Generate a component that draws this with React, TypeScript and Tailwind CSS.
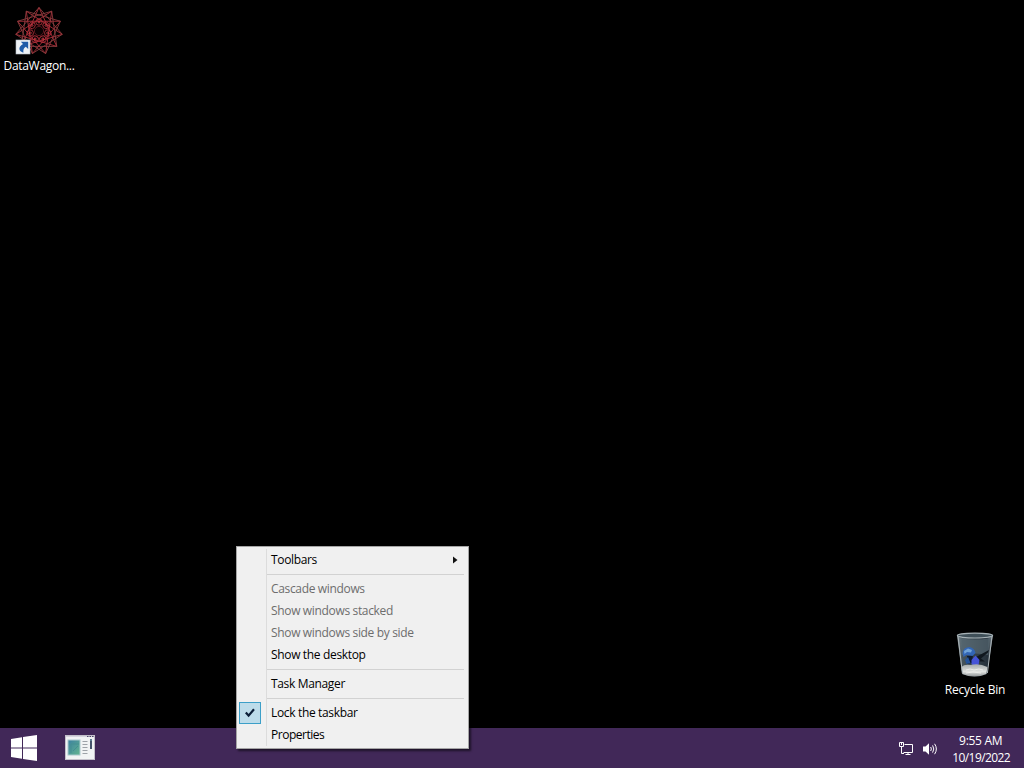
import clsx from 'clsx'
import { ReactNode } from 'react'

type MenuEntry = {
  label: string
  disabled?: boolean
  checked?: boolean
  submenu?: boolean
  tight?: boolean
}

const groups: MenuEntry[][] = [
  [{ label: 'Toolbars', submenu: true }],
  [
    { label: 'Cascade windows', disabled: true },
    { label: 'Show windows stacked', disabled: true },
    { label: 'Show windows side by side', disabled: true },
    { label: 'Show the desktop' },
  ],
  [{ label: 'Task Manager' }],
  [
    { label: 'Lock the taskbar', checked: true },
    { label: 'Properties', tight: true },
  ],
]

function MenuItem({ label, disabled, checked, submenu, tight }: MenuEntry) {
  return (
    <div className="flex h-[22px] items-center">
      <div className="flex w-[34px] shrink-0 pl-[2px]">
        {checked && (
          <div className="flex h-[22px] w-[22px] items-center justify-center border border-[#3c9fc8] bg-[#bddcea]">
            <svg width="12" height="12" viewBox="0 0 12 12">
              <path d="M1.8 5.6 4.6 8.6 10 2.2" fill="none" stroke="#0c1f38" strokeWidth="2.2" />
            </svg>
          </div>
        )}
      </div>
      <div
        className={clsx(
          'flex-1',
          disabled ? 'text-[#6d6d6d]' : 'text-black',
          tight ? 'tracking-[-0.48px]' : 'tracking-[-0.34px]',
        )}
      >
        {label}
      </div>
      {submenu && (
        <svg width="5" height="8" viewBox="0 0 5 8" className="mr-[10px]">
          <path d="M0 0.5 4.5 4 0 7.5Z" fill="#111" />
        </svg>
      )}
    </div>
  )
}

function ContextMenu() {
  return (
    <div className="absolute left-[236px] top-[546px] w-[233px] border border-[#a5a5a5] bg-[#f0f0f0] py-[2px] shadow-[2px_2px_2px_rgba(0,0,0,0.55)]">
      <div className="absolute bottom-[2px] left-[29px] top-[2px] w-px bg-[#dcdcdc]" />
      {groups.map((group, i) => (
        <div key={i}>
          {i > 0 && (
            <div className="flex h-[7px] items-center pl-[30px] pr-[4px]">
              <div className="h-px w-full bg-[#d2d2d2]" />
            </div>
          )}
          {group.map((entry) => (
            <MenuItem key={entry.label} {...entry} />
          ))}
        </div>
      ))}
    </div>
  )
}

// star polygon with n corners, every step-th corner joined
function star(n: number, step: number, r: number, turn = 0) {
  const points: string[] = []
  for (let i = 0; i < n; i++) {
    const a = ((i * step) / n) * Math.PI * 2 + turn
    points.push(`${(24 + r * Math.sin(a)).toFixed(2)},${(24 - r * Math.cos(a)).toFixed(2)}`)
  }
  return points.join(' ')
}

function WagonIcon() {
  const petals = [0, 1, 2, 3, 4, 5, 6]
  return (
    <svg width="48" height="48" viewBox="0 0 48 48">
      <g fill="none" stroke="#b9303c" strokeWidth="0.9">
        <polygon points={star(11, 4, 23.5)} stroke="#b02e39" />
        <polygon points={star(11, 3, 23.5)} stroke="#8a3c3e" />
        {petals.map((p) => (
          <g key={p} transform={`rotate(${p * 51.43} 24 24)`}>
            <circle cx="24" cy="15" r="3.2" stroke="#a82c37" />
            <circle cx="24" cy="15" r="1" stroke="#c83a45" />
          </g>
        ))}
      </g>
      <circle cx="24" cy="24" r="4.6" fill="#0a0203" stroke="#7c2029" strokeWidth="0.7" />
      <rect x="1" y="33" width="14" height="14" fill="#eef2f6" stroke="#b4bcc6" strokeWidth="0.6" />
      <path d="M5.8 34.8h7.4v7.2l-2.4-2.3c-2 1.2-2.8 3-2.4 6-4.6-1.4-5.8-5.6-0.4-8.7z" fill="#1f5ca8" />
    </svg>
  )
}

function RecycleBinIcon() {
  return (
    <svg width="40" height="48" viewBox="0 0 40 48">
      <defs>
        <linearGradient id="glass" x1="0" x2="1">
          <stop offset="0" stopColor="#8c989e" />
          <stop offset="0.14" stopColor="#46545c" />
          <stop offset="0.5" stopColor="#35424a" />
          <stop offset="0.85" stopColor="#25303a" />
          <stop offset="1" stopColor="#8a979e" />
        </linearGradient>
        <linearGradient id="base" x1="0" x2="0" y1="0" y2="1">
          <stop offset="0" stopColor="#a4a9aa" />
          <stop offset="0.6" stopColor="#e0e2e0" />
          <stop offset="1" stopColor="#8f9496" />
        </linearGradient>
      </defs>
      <path d="M2 4 7 43q13 5 25 0L38 4Z" fill="url(#glass)" />
      <path d="M5 7q15 3 30 0l-2 17q-13-3-26 0Z" fill="#5e707a" opacity="0.6" />
      <path d="M21 26 34 19l-1 2.5-7 6 4 3-6 0Z" fill="#10171e" />
      <path d="M12 25 18 24 17 32 12 33Z" fill="#0f1b30" />
      <path d="M7.500 22q1-6 7-6 5 1 6 6l-3 3-6-1-3 2Z" fill="#3265b4" />
      <path d="m9 20 4-2.500 4 1.500-1 2.500-4-.5-2.500 2Z" fill="#70a3d8" />
      <path d="m10 29 3-3 2.500 6-4 1Z" fill="#23539c" />
      <path d="m16.500 29 4-4.500 4 4.500-1 5.500-4 1.500-3-3Z" fill="#4654d8" />
      <path d="M6.400 36q3-3 9-2 9-2 17 2l-1 7q-12 5-24 0Z" fill="url(#base)" />
      <path d="m11 39 4-1 4 1 5-1 4 1M11 42l7-1 8 1" fill="none" stroke="#f5f5f2" opacity="0.7" />
      <path d="M3 5 7.400 42M37 5l-4.600 37" fill="none" stroke="#aab3b7" strokeWidth="1" />
      <ellipse cx="20" cy="4.600" rx="17.600" ry="2.400" fill="#405059" stroke="#a6b1b6" strokeWidth="1.2" />
    </svg>
  )
}

type ShortcutProps = {
  label: string
  className: string
  children: ReactNode
}

function Shortcut({ label, className, children }: ShortcutProps) {
  return (
    <div className={clsx('absolute flex w-[76px] flex-col items-center text-white', className)}>
      {children}
      <div className="whitespace-nowrap pt-[3px] leading-4">{label}</div>
    </div>
  )
}

function StartLogo() {
  return (
    <svg width="26" height="26" viewBox="0 0 26 26" fill="#fff">
      <path d="M0 4 11 2.3V12.5H0ZM12 2.1 26 0V12.5H12ZM0 13.5H11V23.7L0 22ZM12 13.5H26V26L12 23.9Z" />
    </svg>
  )
}

function ServerAppIcon() {
  return (
    <svg width="30" height="25" viewBox="0 0 30 25">
      <defs>
        <linearGradient id="pane" x1="0" x2="1" y1="0" y2="1">
          <stop offset="0" stopColor="#3c80a0" />
          <stop offset="1" stopColor="#62b590" />
        </linearGradient>
      </defs>
      <rect x="0.5" y="0.5" width="29" height="24" fill="#f1f3f4" stroke="#c3c0ca" />
      <path d="M1 1.500h28" stroke="#d5d4de" />
      <path d="M22 1.500h1.500M24.500 1.500H26M27 1.500h1.500" stroke="#4d4668" />
      <rect x="3" y="5" width="12" height="15" fill="url(#pane)" stroke="#a9c8cc" />
      <path d="M6 18V9h8M8 16l5-5" fill="none" stroke="#458f91" />
      <path
        d="M17.500 6.500h5M17.500 9.500h5M17.500 12.500h5M17.500 15.500h5M17.500 18.500h5"
        stroke="#9da2a8"
      />
      <rect x="25" y="4" width="2" height="10" fill="#46546b" />
      <path d="M25 5h2" stroke="#78aabc" />
    </svg>
  )
}

function NetworkIcon() {
  return (
    <svg width="15" height="14" viewBox="0 0 15 14" fill="none" stroke="#fff">
      <path d="M5.5 2.5h8v8h-9M6.500 12.500h5M9 10.500v2" />
      <path d="M.5.5h4v4h-4ZM2.500 4.500v7H5M2.500 1v2" />
    </svg>
  )
}

function SpeakerIcon() {
  return (
    <svg width="16" height="14" viewBox="0 0 16 14" fill="none" stroke="#fff">
      <path d="M1 4.500h2.500L7 1.200v11.600L3.500 9.500H1Z" fill="#fff" stroke="none" />
      <path d="M8.700 5q1.300 2 0 4M10.600 3.400q2.400 3.600 0 7.200M12.600 1.800q3.500 5.200 0 10.400" />
    </svg>
  )
}

function Taskbar() {
  return (
    <div className="flex h-10 items-center bg-[#412858] text-white">
      <div className="flex flex-1 items-center gap-[28px] pl-[11px]">
        <StartLogo />
        <div className="pb-[2px]">
          <ServerAppIcon />
        </div>
      </div>
      <div className="flex items-center gap-[8px] pr-[14px]">
        <div className="flex items-center gap-[8px] pt-[2px]">
          <NetworkIcon />
          <SpeakerIcon />
        </div>
        <div className="ml-[6px] pt-[2px] text-center leading-[17px]">
          <div className="pr-px tracking-[-0.3px]">9:55 AM</div>
          <div className="tracking-[-0.6px]">10/19/2022</div>
        </div>
      </div>
    </div>
  )
}

export default function App() {
  return (
    <div className="relative flex h-screen flex-col overflow-hidden bg-black font-['Open_Sans','Noto_Sans',sans-serif] text-[12px]">
      <div className="relative flex-1">
        <Shortcut label="DataWagon..." className="left-px top-[7px] tracking-[-0.3px]">
          <WagonIcon />
        </Shortcut>
        <Shortcut label="Recycle Bin" className="left-[937px] top-[631px] tracking-[-0.2px]">
          <RecycleBinIcon />
        </Shortcut>
      </div>
      <Taskbar />
      <ContextMenu />
    </div>
  )
}
